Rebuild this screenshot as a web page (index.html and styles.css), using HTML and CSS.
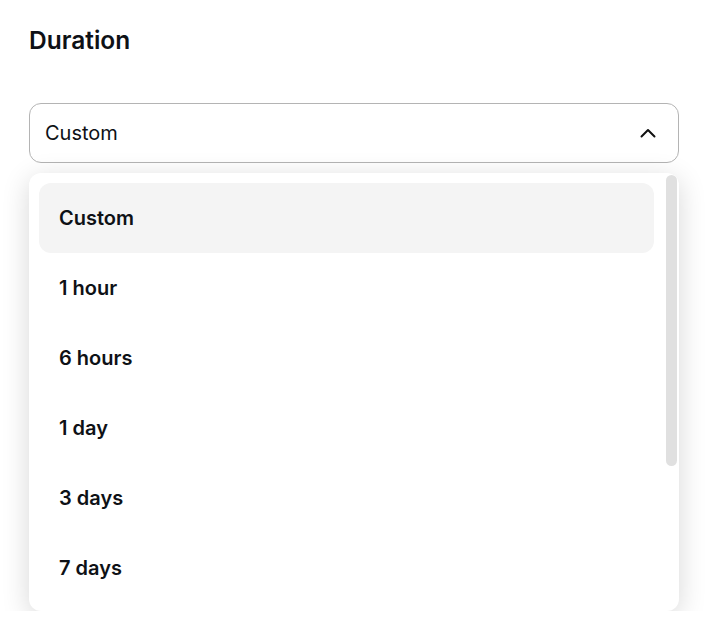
FILE: index.html
```html
<!DOCTYPE html>
<html>
<head>
    <title>Duration</title>
    <link rel="stylesheet" href="styles.css">
</head>
<body>
    <div class="field">
        <h2 class="field-label">Duration</h2>

        <div class="select">
            <span class="select-value">Custom</span>
            <svg class="chevron" width="16" height="16" viewBox="0 0 16 16">
                <path d="M1.5 11.5 L8 5 L14.5 11.5" fill="none" stroke="#111" stroke-width="2" stroke-linecap="round" stroke-linejoin="round"/>
            </svg>
        </div>

        <div class="menu">
            <ul class="menu-list">
                <li class="option selected">Custom</li>
                <li class="option">1 hour</li>
                <li class="option">6 hours</li>
                <li class="option">1 day</li>
                <li class="option">3 days</li>
                <li class="option">7 days</li>
            </ul>
            <!-- scrollbar thumb, list is scrolled to top -->
            <div class="scroll-thumb"></div>
        </div>
    </div>
</body>
</html>
```

FILE: styles.css
```css
body {
    font-family: Inter, "Liberation Sans", sans-serif;
    margin: 0;
    padding: 22px 27px 0 29px;
    background-color: #fff;
    color: #0e1116;
}
.field-label {
    font-size: 24.5px;
    font-weight: 600;
    line-height: 36px;
    margin: 0 0 45px 0;
}
.select {
    display: flex;
    align-items: center;
    justify-content: space-between;
    height: 58px;
    padding: 0 22px 0 15px;
    border: 1px solid #b4b4b4;
    border-radius: 12px;
}
.select-value {
    font-size: 20px;
}
.chevron {
    display: block;
}
.menu {
    position: relative;
    margin-top: 10px;
    height: 438px;
    background-color: #fff;
    border-radius: 12px;
    box-shadow: 0 6px 28px rgba(0, 0, 0, 0.16);
    overflow: hidden;
}
.menu-list {
    list-style: none;
    margin: 0;
    padding: 10px 25px 10px 10px;
}
.option {
    display: flex;
    align-items: center;
    height: 70px;
    padding: 0 20px;
    font-size: 20px;
    font-weight: 600;
    border-radius: 12px;
}
.option.selected {
    background-color: #f4f4f4;
}
.scroll-thumb {
    position: absolute;
    top: 2px;
    right: 2px;
    width: 11px;
    height: 291px;
    background-color: #e0e0e0;
    border-radius: 6px;
}
```
